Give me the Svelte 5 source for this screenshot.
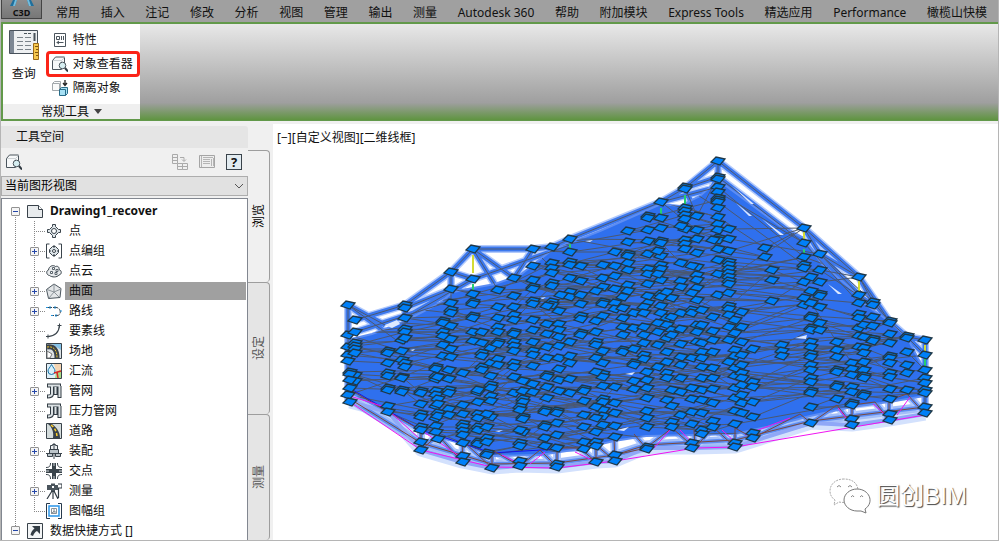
<script lang="ts">
  /**
   * Civil 3D workspace: menu bar, ribbon panel, toolspace tree and a model viewport.
   */

  const menus = [
    '常用', '插入', '注记', '修改', '分析', '视图', '管理', '输出', '测量', 'Autodesk 360',
    '帮助', '附加模块', 'Express Tools', '精选应用', 'Performance', '橄榄山快模',
  ];

  type Item = { label: string; icon: string; expandable?: boolean };

  const items: Item[] = [
    { label: '点', icon: 'point' },
    { label: '点编组', icon: 'group', expandable: true },
    { label: '点云', icon: 'cloud' },
    { label: '曲面', icon: 'surface', expandable: true },
    { label: '路线', icon: 'route', expandable: true },
    { label: '要素线', icon: 'feature' },
    { label: '场地', icon: 'site' },
    { label: '汇流', icon: 'basin' },
    { label: '管网', icon: 'pipe', expandable: true },
    { label: '压力管网', icon: 'pipe' },
    { label: '道路', icon: 'road' },
    { label: '装配', icon: 'assembly', expandable: true },
    { label: '交点', icon: 'cross' },
    { label: '测量', icon: 'survey', expandable: true },
    { label: '图幅组', icon: 'sheets' },
  ];

  const sideTabs = ['浏览', '设定', '测量'];

  let selected = $state('曲面');
  let activeTab = $state('浏览');
  let view = $state('当前图形视图');

  const icons: Record<string, string> = {
    sheet: '<path d="M.5 2.500h11l4 4v8H.5z" fill="#e8ebed" stroke="#39424a"/><path d="M11.500 2.500v4h4" fill="#fff" stroke="#39424a"/>',
    point: '<g fill="#dfe6ea" stroke="#3a444c"><path d="M6.500 1.500h3v2l3 3h2v3h-2l-3 3v2h-3v-2l-3-3h-2v-3h2l3-3z"/><circle cx="8" cy="8" r="2.500" fill="#fff"/></g>',
    group: '<path d="M3.500 1h-3v14h3M12.500 1h3v14h-3" fill="none" stroke="#3a444c"/><g fill="#dfe6ea" stroke="#3a444c"><path d="M6.500 3.500h3L12.500 6.500v3L9.500 12.500h-3L3.500 9.500v-3z"/><path d="M8 2v3M8 11v3M3 8h2M11 8h2"/><circle cx="8" cy="8" r="1.500" fill="#fff"/></g>',
    cloud: '<path d="M3.500 12.500C0 12 0 7.500 2.500 7 3 3 7 1.500 9.500 3.500c3-1 4 1.500 3.500 3 3 1 3 5 0 5.500C11 14.500 6 14.500 3.500 12.500z" fill="#e7eaec" stroke="#3a444c"/><path d="M6.500 4.500h2v2h-2zM10 6.500h2v2h-2zM4.500 8.500h2v2h-2zM9 9.500h2v2H9z" fill="#fff" stroke="#59636b"/>',
    surface: '<path d="M8 1l7 4.500-1 9-11.500 1-2-9z" fill="#e3e6e8" stroke="#4c565e"/><path d="M8 1v8M8 9L1 6.500M8 9l7-3M8 9l5 5M8 9l-5 6" stroke="#8d959b" fill="none"/>',
    route: '<path d="M1 4.500h9c5 0 6 8 1 8H5" fill="none" stroke="#3a444c" stroke-dasharray="5 1"/><path d="M0 4.500h2M4 3v3M9 3v3M5 12.500h2M10 11v3M14 8h2" stroke="#2394dd"/>',
    feature: '<path d="M2 13.500C9 13 13 10 13.500 2" fill="none" stroke="#3a444c" stroke-width="1.200"/><path d="M0 13.500h4M2 11.500v4M11.500 2.500h4M13.500.5v4" stroke="#3a444c"/>',
    site: '<path fill="#dce1e4" stroke="#39424a" d="M.5.5h15v15H.5z"/><path fill="#87c3e8" d="M6 1h9v6z"/><path d="M1 4c7-1 10 3 10 11" stroke="#39424a" stroke-width="5" fill="none"/><path d="M1 4c7-1 10 3 10 11" stroke="#f4c52c" fill="none" stroke-dasharray="2 1"/><path d="M1 8l5 3-2 4H1z" fill="#fff" stroke="#777"/>',
    basin: '<path fill="#dff0f9" stroke="#39424a" d="M.5.5h15v15H.5z"/><path d="M8 1h7v7l-5 1z" fill="#f4d4b1"/><path d="M10 9l5-2v8H9z" fill="#a8dc86"/><path d="M5.500 1.500C4 4.500 2 6 2 8a3.500 3.500 0 007 0c0-2-2-3.500-3.500-6.500z" fill="#d9eff9" stroke="#1874a8"/><path d="M8 10l7-2M11 9l1 6" stroke="#d72626" stroke-width="1.500" fill="none"/>',
    pipe: '<g fill="none"><path d="M1 2.500h14M6 3v8q0 2.500-5 2.500M13.500 3v12M9.500 4v8" stroke="#323c44" stroke-width="4"/><path d="M2 2.500h12M6 3v8q0 2-4 2.500M13.500 3v11M9.500 4v7" stroke="#dbe1e4" stroke-width="2"/></g>',
    road: '<path fill="#d4dcdc" stroke="#39424a" d="M.5.5h15v15H.5z"/><path d="M2 1h4c5 4 8 8 8 14H7C8 9 6 4 2 1z" fill="#39424a"/><path d="M5 2c4 3 6 7 6 13" stroke="#ffd02c" stroke-width="1.500" stroke-dasharray="3 2" fill="none"/>',
    assembly: '<path d="M4.500 6.500v-4h2v-1h3v1h2v4z" fill="#edf0f2" stroke="#39424a"/><path d="M8 0v16M0 10.500h16" stroke="#39424a"/><path d="M3.500 6.500h9v4h-9zM1.500 10.500h5v3h-5zM9.500 10.500h5v3h-5z" fill="#bcc5ca" stroke="#39424a"/>',
    cross: '<path d="M6 0h4v6h6v4h-6v6H6v-6H0V6h6z" fill="#39434a"/><path d="M4.500 0c0 3-1 4.500-4.500 4.500M11.500 0c0 3 1 4.500 4.500 4.500M4.500 16c0-3-1-4.500-4.500-4.500M11.500 16c0-3 1-4.500 4.500-4.500" fill="none" stroke="#39434a"/><path d="M8 0v3M8 13v3M0 8h3M13 8h3" stroke="#cdd3d6"/>',
    survey: '<path d="M1 2h4V.5h4V2h3v5H9v2H5V7H1z" fill="#4a545c"/><path d="M6 3h2v2H6z" fill="#fff"/><path d="M6 8l-5 8M8 8l4 8M7 8v8M12 1h4v4h-4M12.500 5v10" stroke="#333d45" stroke-width="1.200" fill="none"/>',
    sheets: '<path d="M4 .5H.5v15H4M12 .5h3.500v15H12" fill="none" stroke="#27394c"/><path d="M3 3h10v10H3z" fill="#fff" stroke="#2a95e9" stroke-width="1.500"/><path d="M5.500 5.500h5v5h-5zM5 11l3-3 3 2M8 5v6" fill="none" stroke="#8a9298"/>',
    shortcut: '<path d="M.5.5h15v15H.5z" fill="#f3f5f6" stroke="#39424a"/><path d="M5 3h8v8l-3-3c-2 1-3 2.500-4 5L3.500 12c.5-3 2-5 4-6.500z" fill="#333d45"/>',
    props: '<path d="M2.500 1.500h11v13h-11z" fill="#fff" stroke="#4b555d"/><path d="M4.500 4.500h3v3h-3zM9.500 4v4M11.500 4v4M4.500 10.500h7M7 9l-2 1.500L7 12" fill="none" stroke="#4b555d"/>',
    viewer: '<path d="M.5 4.500l3-3.500h9v9l-3 3.500h-9z" fill="#f6f8f9" stroke="#4b555d"/><path d="M1 4.500h8.500v8.500M9.500 4.500l3-3" fill="none" stroke="#ccd1d4"/><circle cx="10.500" cy="9.500" r="3.300" fill="#d6eef1" stroke="#4b555d"/><path d="M13 12l3 3.500" stroke="#303a42" stroke-width="2"/>',
    isolate: '<path d="M.5 3.500l2-2h6v7l-1 2h-7z" fill="#fafbfb" stroke="#a3a9ad"/><path d="M.5 3.500h7v7" fill="none" stroke="#a3a9ad"/><path d="M7.500 9.500l2-2h6v6l-2 2h-6z" fill="#a6e0f4" stroke="#276b88"/><path d="M7.500 9.500h6v6" fill="none" stroke="#276b88"/><path d="M13 0v5M11 3l2 2.500L15 3" stroke="#222" stroke-width="1.300" fill="none"/>',
    transfer: '<g fill="none" stroke="#aaa"><path d="M.5.5h5v9h-5zM0 3.500h6M0 6.500h6M5.500 9.500h5v6h-5zM10.500 9.500h5v6h-5zM5 12.500h11M8 3.500h4V7M10 5.500l2 2 2-2"/></g>',
    panorama: '<path d="M.5 1.500h15v12H.5z" fill="#eee" stroke="#a5a5a5"/><path d="M2.500 2v11M4 5.500h7M4 7.500h7M4 9.500h7M4 3.500h10M12.500 5v7M14.500 4v8" stroke="#b5b5b5"/>',
  };

  // Node columns of the model: x followed by the elevations on that line
  const columns: number[][] = [
    [348, 305, 335, 347, 355, 361, 395], [355, 320, 332, 343, 346, 349, 353, 375, 381], [350, 372, 374, 380, 388, 402],
    [388, 351, 353, 363, 373, 376, 388, 390, 406, 412], [402, 340, 351, 360, 377, 378, 390, 392],
    [405, 305, 308, 318, 329, 332, 338, 363, 367], [421, 391, 393, 404, 414, 417, 427, 430, 442, 450],
    [436, 367, 369, 376, 379, 391, 395, 406, 418, 426, 432], [438, 377, 399, 404, 413, 416, 439],
    [443, 321, 323, 332, 336, 345, 356], [451, 272, 289, 303, 310, 313, 326, 339, 349, 357],
    [449, 370, 379, 390, 393, 409, 415], [463, 373, 405, 414, 424, 427, 431, 435, 443, 456, 462],
    [473, 249, 279, 294, 302, 304, 316, 318, 332, 341], [482, 332, 343, 353, 356, 367, 370],
    [478, 392, 390, 402, 414, 418, 427, 430, 442, 444], [491, 348, 363, 376, 385, 388, 396, 401, 417],
    [487, 414, 427, 438, 442, 453, 455], [492, 468], [498, 290, 307, 318, 327, 332, 342, 344, 359, 365],
    [514, 278, 296, 307, 315, 320, 332, 334, 342, 346, 351, 363, 367, 377, 393],
    [523, 381, 391, 399, 402, 417, 419, 432], [520, 407, 410, 430, 443, 446, 461, 466],
    [533, 249, 266, 280, 287, 289, 301, 304, 320, 330, 342, 351, 355, 366, 384, 392],
    [552, 247, 263, 268, 273, 283, 286, 302, 305], [547, 306, 324, 334, 347, 358, 375, 377, 387, 398],
    [545, 410, 412, 425, 427, 438, 446], [559, 311, 324, 330, 337, 346, 358, 369, 380, 391],
    [557, 411, 413, 423, 435, 448, 464, 467], [570, 239, 252, 262, 265, 278, 292, 297, 342, 356, 363, 379, 393],
    [561, 295], [581, 266, 281, 295, 304, 316, 319, 333, 335], [584, 389, 391, 401, 415, 427, 442, 449],
    [603, 265, 278, 287, 302, 304, 316, 351, 363, 374, 377, 386, 399, 402, 410, 416, 425],
    [596, 291, 321, 332, 342, 345, 358, 372, 407, 418, 432, 442, 446, 462],
    [615, 252, 266, 276, 289, 303, 309, 387, 403, 413, 426, 437, 455, 461],
    [628, 231, 242, 254, 256, 263, 270, 285, 291], [623, 297, 308, 318, 327, 335, 350, 352],
    [634, 313, 328, 349, 363, 365, 381, 389], [648, 216, 218, 230, 241, 254, 269, 274, 284, 296, 303],
    [644, 307, 313, 327, 335, 343, 355, 359], [647, 372, 380, 388, 398, 411, 418, 427, 447, 449],
    [661, 202, 218, 228, 241, 243, 256, 265, 269, 280, 294, 297, 306, 313], [658, 251, 274, 323, 332, 345, 367],
    [667, 292, 318, 325, 338, 352, 362, 373, 378, 400], [672, 298, 317, 330, 335, 390, 406, 422, 427],
    [685, 187, 189, 208, 211, 215, 219, 229, 240, 244, 249], [681, 226, 263, 281, 287, 313, 329, 344, 357, 365, 378, 392, 415],
    [697, 216, 230, 239, 253, 267, 275, 280, 288, 300, 325, 332, 342], [692, 266, 293, 310, 313, 358, 388, 399, 412, 424, 443, 448],
    [702, 310, 325, 343, 352, 358, 367, 378, 390, 400, 413, 430, 434],
    [718, 161, 177, 179, 187, 192, 198, 200, 202, 208, 217, 224, 230, 238, 240, 249, 260, 274, 295],
    [713, 240, 317, 331, 340, 352, 368, 378, 389, 403, 421, 427],
    [729, 229, 239, 251, 262, 265, 269, 273, 277, 281, 284, 293, 306, 309, 315, 327, 340, 362],
    [735, 320, 333, 350, 356, 368, 376, 388, 398, 411, 424, 443, 447],
    [742, 312, 327, 342, 355, 365, 373, 378, 385, 395, 403, 413], [753, 349, 382, 387, 402, 417, 433, 438],
    [765, 248, 257], [772, 270, 280, 301], [782, 345, 351, 356],
    [804, 228, 243, 257, 265, 268, 282, 298, 305], [811, 277, 291, 303, 316, 318, 328, 330, 342, 347, 354, 357, 365, 370, 378, 382, 391, 393, 407, 423],
    [820, 254, 270, 282, 294, 296, 307, 323, 330], [837, 342, 350, 357, 370, 372, 385, 387, 399],
    [859, 277, 295, 303, 314, 318, 328, 336, 347], [852, 363, 369, 375, 387, 392, 403, 405, 419, 425],
    [864, 325, 337, 348, 353, 362, 370, 376, 378, 394, 396], [873, 302, 305, 317, 326, 339, 341],
    [890, 321, 323, 334, 343, 356, 358, 363, 373, 377, 389, 399, 414, 420],
    [907, 336, 338, 352, 365, 373, 390], [925, 340, 355, 370, 378, 383, 390, 393, 407, 413],
  ];

  const nodes = columns.flatMap(([x, ...ys]) => ys.map((y) => [x, y]));

  // Thin triangulation lines between nodes of comparable height
  const mesh = nodes
    .flatMap(([x, y], i) =>
      nodes
        .filter(([nx, ny], j) => nx - x > 18 && nx - x < 130 && Math.abs(ny - y) < 22 && (i * 7 + j * 5) % 19 === 0)
        .slice(0, 2)
        .map(([nx, ny]) => `M${x} ${y}L${nx} ${ny}`)
    )
    .join('');

  // Long links that cross the sparse slope on the right
  const fan =
    'M729 229L804 228M729 239L820 254M729 251L804 228M718 192L804 243M718 202L804 265M718 217L765 248M729 262L820 270M729 277L804 228' +
    'M729 284L811 291M729 306L772 270 804 282M735 320L772 301 811 277M735 333L811 303M742 342L811 318M729 293L804 298M742 327L820 296' +
    'M753 349L782 345 811 330M742 365L811 342M753 382L811 354M753 387L811 370M753 402L811 378M753 417L811 393M742 395L811 365' +
    'M811 303L837 342 852 363M820 270L859 277 820 282M820 254L873 302M811 393L852 387M811 407L852 392';

  const body =
    'M347 340L372 334 403 322 440 303 453 292 473 288 495 284 520 275 552 250 600 231 661 204 680 206 700 196 718 180 745 200 780 226 804 238 822 264 850 288 862 302 890 322 907 337 925 372 925 396 889 402 852 407 810 416 780 424 735 434 700 435 646 436 614 441 580 449 540 455 492 456 463 444 421 432 388 412 349 392z';

  const frame =
    'M348 305V400M348 305L403 345M348 305L385 325M355 320L405 305M405 308L452 289M405 318L473 279M355 332L473 294M405 305L451 272' +
    'M405 305V340M451 272L473 249M451 272V315M451 272L473 279M452 289L473 294M473 249H533M473 249L498 290M473 249L514 278M473 279L570 245' +
    'M498 290L552 263M533 249L514 278M533 249L552 247L570 239L661 202L685 188L718 161V200M685 188L718 177M661 202L718 187M685 188L697 216' +
    'M661 202L697 230M697 216L718 177M718 161L804 228M718 177L800 240M718 187L804 257M804 228L859 277M804 228L820 254' +
    'M820 254L859 277M820 254L859 295M804 243L859 303M820 270L873 305M859 277L873 302L890 322L907 337L925 340V410M859 277L890 322' +
    'M907 337L925 355M907 352L925 370';

  const base = 'M350 402L388 412 421 450 462 462 492 468 520 466 557 467 596 462 615 461 646 448 695 448 735 447 811 423 852 425 889 420 925 414';

  const chord = 'M350 399L421 443 492 464 557 463 615 455 646 445 735 440 811 421 925 407';

  const truss =
    'M351 390L388 412 421 430 421 450 438 435 462 462 463 441 492 468 492 450 520 466 540 450 557 467 557 448 580 448 596 462 596 445 615 461 614 438' +
    'M615 455L646 448 634 434M646 448L672 428 695 448 694 430M695 448L713 427 735 447 735 428 753 438 800 414 811 423 837 405 852 425 852 405 875 402 889 420' +
    ' 889 400 907 394 925 414';

  const magenta =
    'M350 396L388 408M350 402L421 450 492 467 557 468 615 461 695 448 735 447 925 415M388 410L421 440M421 430L462 458M502 455L520 464M530 464L545 452' +
    'M575 452L596 462M654 448L670 430M680 430L695 446M722 430L735 442M745 435L790 418M838 408L852 425M873 404L889 418M897 415L910 397';

  const strands = [
    { d: 'M473 255V273M804 232V240M859 281V292M925 345V352', color: '#d4dc34' },
    { d: 'M473 284V290M661 208V214M685 195V206M570 244V249M804 249V254M925 359V368', color: '#24cf70' },
  ];
</script>

{#snippet icon(name: string)}
  <svg class="icon" viewBox="0 0 16 16" aria-hidden="true">{@html icons[name]}</svg>
{/snippet}

<div class="app">
  <header class="menubar">
    <button class="app-button" aria-label="Civil 3D">
      <svg viewBox="0 0 24 7" aria-hidden="true">
        <path d="M3 0h4L5 6H0zM17 0h4l3 6h-5z" fill="#1f6f9c" />
        <path d="M5 0h2L5 6H3zM17 0h2l2 6h-2z" fill="#73bddd" />
      </svg>
      <span>C3D</span>
    </button>
    <nav class="menus">
      {#each menus as menu}
        <button class="menu">{menu}</button>
      {/each}
    </nav>
  </header>

  <section class="ribbon">
    <div class="panel">
      <div class="panel-body">
        <button class="query">
          <svg viewBox="0 0 32 32" aria-hidden="true">
            <path d="M1.500 1.500h28v23h-28z" fill="#eef0f2" stroke="#48515b" />
            <path d="M2 2h4v22H2z" fill="#7d8794" />
            <path d="M16 4.500h3M20 4.500h3" stroke="#49525a" />
            <path d="M9 8.500h6M17 8.500h6M9 12.500h6M17 12.500h6M9 16.500h6M17 16.500h6M9 20.500h6M17 20.500h6" stroke="#7b838a" />
            <path d="M26.500 4v8" stroke="#49525a" stroke-width="2" />
            <path d="M25.500 14.500h5v16h-5z" fill="#f6c74d" stroke="#9c6b16" />
            <path d="M27 17.500h3M28 20.500h2M27 23.500h3M28 26.500h2" stroke="#80560f" />
          </svg>
          查询
        </button>
        <div class="tools">
          <button class="tool">{@render icon('props')}特性</button>
          <button class="tool marked">{@render icon('viewer')}对象查看器</button>
          <button class="tool">{@render icon('isolate')}隔离对象</button>
        </div>
      </div>
      <button class="panel-title">常规工具 <span class="caret"></span></button>
    </div>
  </section>

  <main class="workspace">
    <aside class="toolspace">
      <div class="palette">
        <h2 class="palette-title"><span class="grip"></span>工具空间</h2>
        <div class="palette-tools">
          <button aria-label="对象查看器">{@render icon('viewer')}</button>
          <span class="spacer"></span>
          <button aria-label="传递" disabled>{@render icon('transfer')}</button>
          <button aria-label="全景" disabled>{@render icon('panorama')}</button>
          <button class="help" aria-label="帮助">?</button>
        </div>
        <div class="picker">
          <select bind:value={view} aria-label="视图">
            <option>当前图形视图</option>
            <option>主视图</option>
          </select>
          <svg viewBox="0 0 10 6" aria-hidden="true"><path d="M1 1l4 4 4-4" fill="none" stroke="#555" /></svg>
        </div>

        <ul class="tree">
          <li class="row root first">
            <span class="rail"><button class="toggle" aria-label="折叠"></button></span>
            {@render icon('sheet')}
            <button class="label drawing">Drawing1_recover</button>
          </li>
          {#each items as item, i}
            <li class="row">
              <span class="rail"></span>
              <span class="branch" class:last={i === items.length - 1}>
                {#if item.expandable}
                  <button class="toggle closed" aria-label="展开"></button>
                {/if}
              </span>
              {@render icon(item.icon)}
              <button class="label" class:selected={selected === item.label} onclick={() => (selected = item.label)}>
                {item.label}
              </button>
            </li>
          {/each}
          <li class="row root end">
            <span class="rail"><button class="toggle" aria-label="折叠"></button></span>
            {@render icon('shortcut')}
            <button class="label">数据快捷方式 []</button>
          </li>
        </ul>
      </div>

      <div class="side-tabs">
        {#each sideTabs as tab}
          <button class="side-tab" class:active={activeTab === tab} onclick={() => (activeTab = tab)}>
            <span>{tab}</span>
          </button>
        {/each}
      </div>
    </aside>

    <section class="viewport">
      <div class="view-label">[−][自定义视图][二维线框]</div>
      <svg class="model" viewBox="273 124 725 416" role="img" aria-label="曲面模型">
        <defs>
          <clipPath id="body-clip"><path d={body} /></clipPath>
          <path id="node" d="M-7 1L-2-4L7-2L2 4z" />
        </defs>

        <!-- Selection glow -->
        <g fill="none" stroke-linejoin="round">
          <path d={base} stroke="#d3e1fd" stroke-width="13" />
          <path d={chord} stroke="#a3bff9" stroke-width="9" />
          <path d={truss} stroke="#b3cafb" stroke-width="8" />
          <path d={truss} stroke="#5d8df3" stroke-width="4" />
          <path d={chord} stroke="#5d8df3" stroke-width="4" />
          <path d={base} stroke="#8fa8f7" stroke-width="4" />
          <path d={frame} stroke="#b3cafb" stroke-width="8" />
          <path d={frame} stroke="#3c78ee" stroke-width="5" />
        </g>

        <path d={body} fill="#2f70ee" stroke="#5d8df3" stroke-width="2" />
        <g class="mesh">
          <path d={mesh} clip-path="url(#body-clip)" />
          <path d={fan} />
          <path d={frame} />
        </g>
        <path d="M351 389L421 430 492 453 557 449" fill="none" stroke="#1414e6" />
        <path d={truss} fill="none" stroke="#7a493d" />
        <path d={chord} fill="none" stroke="#7a493d" />
        <path d={magenta} fill="none" stroke="#f014f0" />
        {#each strands as strand}
          <path d={strand.d} fill="none" stroke={strand.color} stroke-width="2" />
        {/each}

        <!-- Gaps in the triangulation -->
        <path
          d="M385 325l12-5 3 4-8 4zM625 374l10-2-3 3zM617 430l12-3-5 4zM795 338l12-3-1 4zM410 350l5-1-2 2zM585 241l8-1-3 2zM540 298l6-1-3 2zM495 431l8-1-4 2zM732 186l22 18-3 0zM736 203l16 13-3 0zM762 219l22 16-4 0zM828 284l14 10-4 0z"
          fill="#dce8ff"
        />

        <g class="nodes">
          {#each nodes as [x, y]}
            <use href="#node" {x} {y} />
          {/each}
        </g>
      </svg>

      <div class="watermark">
        <svg viewBox="0 0 42 36" aria-hidden="true">
          <g fill="#fff" stroke="#aaa" stroke-width="1">
            <path d="M15 1C7 1 1 6 1 13c0 4 2 7 5 9l-1 5 5-3c10 2 19-3 19-11S23 1 15 1z" stroke-dasharray="2 1" />
            <path d="M28 11c-7 0-13 5-13 11s6 11 13 11h4l5 2-1-4c10-7 4-20-8-20z" stroke="#777" />
            <path d="M8 9q2-3 4 0M19 9q2-3 4 0M22 19q2-3 3 0M31 19q2-3 3 0" fill="none" stroke="#888" />
          </g>
        </svg>
        <span>圆创BIM</span>
      </div>
    </section>
  </main>
</div>

<style>
  :global(body) {
    margin: 0;
    background: #f0f0f0;
  }

  .app,
  .app * {
    box-sizing: border-box;
  }

  .app {
    display: flex;
    flex-direction: column;
    min-height: 100vh;
    border: 1px solid #b5b5b5;
    border-top: 0;
    overflow: hidden;
    font-family: "Noto Sans", "Noto Sans CJK SC", sans-serif;
    font-size: 12px;
    line-height: 20px;
    color: #111;
  }

  button {
    margin: 0;
    padding: 0;
    border: 0;
    background: none;
    font: inherit;
    color: inherit;
    white-space: nowrap;
  }

  .icon {
    flex: none;
    width: 16px;
    height: 16px;
  }

  .menubar {
    display: flex;
    height: 22px;
    background: #a0a0a0;
  }

  .app-button {
    display: flex;
    flex: none;
    flex-direction: column;
    align-items: center;
    width: 41px;
    height: 19px;
    border: 1px solid #444;
    border-top: 0;
    background: linear-gradient(#8d8d8d, #777);
    font-size: 9px;
    font-weight: 700;
    line-height: 11px;
  }

  .app-button svg {
    width: 24px;
    height: 7px;
  }

  .menus {
    display: flex;
    flex: 1;
    justify-content: space-between;
    padding: 0 11px 0 14px;
  }

  .menu {
    padding-top: 4px;
    line-height: 18px;
  }

  .ribbon {
    display: flex;
    height: 99px;
    border: 2px solid #62994a;
    border-right: 0;
    border-bottom-width: 1px;
    background: linear-gradient(#e8e8e8, #9f9f9f 82%, #5f9440);
  }

  .panel {
    display: flex;
    flex-direction: column;
    width: 137px;
    background: #fff;
    border-bottom: 1px solid #62994a;
  }

  .panel-body {
    display: flex;
    flex: 1;
    gap: 5px;
    padding: 4px 0 0 4px;
  }

  .query {
    display: flex;
    flex-direction: column;
    align-items: center;
    gap: 3px;
    width: 34px;
    padding-top: 1px;
  }

  .query svg {
    width: 32px;
    height: 32px;
  }

  .tools {
    display: flex;
    flex-direction: column;
    width: 95px;
  }

  .tool {
    display: flex;
    align-items: center;
    gap: 5px;
    height: 24px;
    padding-left: 6px;
  }

  .marked {
    height: 26px;
    margin: -1px 0;
    padding-left: 3px;
    border: 3px solid #fb2418;
    border-radius: 4px;
  }

  .panel-title {
    height: 15px;
    background: #efefef;
    line-height: 15px;
  }

  .caret {
    display: inline-block;
    margin: 0 0 2px 2px;
    border: 4px solid transparent;
    border-top: 5px solid #444;
    border-bottom: 0;
  }

  .workspace {
    display: flex;
    flex: 1;
    padding-top: 3px;
  }

  .toolspace {
    display: flex;
    flex: none;
    width: 272px;
  }

  .palette {
    display: flex;
    flex-direction: column;
    width: 247px;
    padding-top: 2px;
  }

  .palette-title {
    display: flex;
    align-items: center;
    gap: 5px;
    height: 22px;
    margin: 0;
    padding-left: 5px;
    border-radius: 0 3px 0 0;
    background: #e5e5e5;
    font-size: 12px;
    font-weight: 400;
  }

  .grip {
    width: 5px;
    height: 10px;
    background: radial-gradient(#999 40%, transparent 45%) 0 0 / 2px 2px;
  }

  .palette-tools {
    display: flex;
    align-items: center;
    gap: 11px;
    height: 28px;
    padding: 0 6px 0 5px;
  }

  .palette-tools button {
    display: grid;
    width: 16px;
    height: 16px;
  }

  .spacer {
    flex: 1;
  }

  .palette-tools .help {
    place-items: center;
    border: 1px solid #39424a;
    background: #e2ebf0;
    font-size: 13px;
    font-weight: 700;
    line-height: 13px;
  }

  .picker {
    position: relative;
  }

  .picker select {
    display: block;
    width: 100%;
    height: 20px;
    padding: 0 3px;
    border: 1px solid #adadad;
    border-radius: 0;
    background: #e1e1e1;
    appearance: none;
    font: inherit;
    line-height: 18px;
    color: #000;
  }

  .picker svg {
    position: absolute;
    top: 7px;
    right: 4px;
    width: 10px;
    height: 6px;
    pointer-events: none;
  }

  .tree {
    flex: 1;
    margin: 2px 0 0;
    padding: 2px 0 0;
    border: 1px solid #828790;
    border-bottom: 0;
    background: #fff;
    list-style: none;
  }

  .row {
    --dots: repeating-linear-gradient(#888 0 1px, transparent 1px 2px);
    display: flex;
    align-items: center;
    height: 20px;
  }

  .rail,
  .branch {
    display: grid;
    place-items: center;
    flex: none;
    height: 20px;
    background: var(--dots) 13px 0 / 1px 20px no-repeat;
  }

  .rail {
    width: 20px;
  }

  .branch {
    width: 24px;
    background:
      var(--dots) 12px 0 / 1px 20px no-repeat,
      repeating-linear-gradient(90deg, #888 0 1px, transparent 1px 2px) 12px 10px / 11px 1px no-repeat;
  }

  .branch.last,
  .end .rail {
    background-size: 1px 10px, 11px 1px;
  }

  .root .rail {
    width: 25px;
    padding-left: 2px;
  }

  .first .rail {
    background-position: 13px 10px;
  }

  .end {
    height: 19px;
  }

  .toggle {
    --bar: linear-gradient(#2446a8, #2446a8);
    width: 9px;
    height: 9px;
    border: 1px solid #929292;
    border-radius: 1px;
    background: var(--bar) 50% 50% / 5px 1px no-repeat, #f5f5f5;
  }

  .closed {
    background: var(--bar) 50% 50% / 5px 1px no-repeat, var(--bar) 50% 50% / 1px 5px no-repeat, #f5f5f5;
  }

  .label {
    height: 18px;
    margin-left: 3px;
    padding-left: 4px;
    line-height: 18px;
    text-align: left;
  }

  .selected {
    flex: 1;
    margin-right: 1px;
    background: #a0a0a0;
  }

  .drawing {
    font-weight: 700;
  }

  .side-tabs {
    display: flex;
    flex-direction: column;
    width: 22px;
    padding-top: 26px;
  }

  .side-tab {
    display: grid;
    flex: none;
    height: 132px;
    place-items: center;
    border: 1px solid #9d9d9d;
    border-left: 0;
    border-bottom: 0;
    border-radius: 0 4px 4px 0;
    background: #e5e5e5;
    color: #555;
  }

  .side-tab:last-child {
    flex: 1;
    height: auto;
  }

  .side-tab.active {
    background: #f0f0f0;
    color: #000;
  }

  .side-tab span {
    writing-mode: vertical-rl;
    text-orientation: sideways;
    transform: rotate(180deg);
  }

  .viewport {
    position: relative;
    flex: 1;
    min-width: 0;
    background: #fff;
  }

  .view-label {
    position: absolute;
    top: 4px;
    left: 4px;
  }

  .model {
    display: block;
    width: 100%;
  }

  .mesh {
    fill: none;
    stroke: #4b5870;
    stroke-width: 1;
  }

  .nodes {
    fill: #0080f8;
    stroke: #1f3848;
    stroke-width: 1.3;
  }

  .watermark {
    position: absolute;
    right: 31px;
    bottom: 26px;
    display: flex;
    align-items: center;
    gap: 5px;
    color: #fff;
    font-family: "Liberation Sans", "Noto Sans CJK SC", sans-serif;
    font-size: 24px;
    line-height: 36px;
    text-shadow: 1px 1px 1px #444;
  }

  .watermark svg {
    width: 42px;
    height: 36px;
  }
</style>
